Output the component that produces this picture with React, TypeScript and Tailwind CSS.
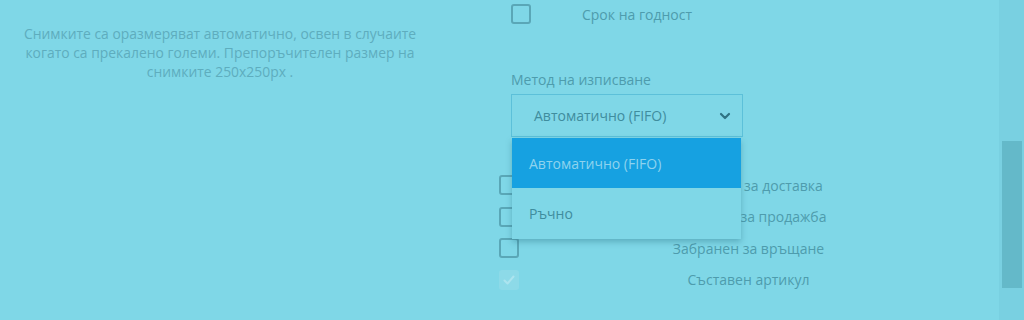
import React from "react";

const font = { fontFamily: '"Open Sans", "Noto Sans", sans-serif' };

const Box = ({ checked = false }: { checked?: boolean }) => {
	if (checked)
		return (
			<div className="w-5 h-5 shrink-0 rounded-[3px] bg-[#8ddae8] flex items-center justify-center">
				<svg width="14" height="14" viewBox="0 0 14 14" fill="none">
					<path d="M2.5 7.5l3 3 6-7" stroke="#ace4ef" strokeWidth="2" strokeLinecap="round" strokeLinejoin="round" />
				</svg>
			</div>
		);

	return <div className="w-5 h-5 shrink-0 rounded-[3px] border-2 border-[#5aa7b7]" />;
};

const CheckRow = ({ label, checked }: { label: string; checked?: boolean }) => {
	return (
		<div className="flex items-center h-[20px]">
			<Box checked={checked} />
			<div className="flex-1 text-center text-[14px] text-[#4e9cad] pl-[3px]">{label}</div>
		</div>
	);
};

const App = () => {
	return (
		<div className="w-[1024px] h-[320px] bg-[#7fd7e7] overflow-hidden flex" style={font}>
			<div className="w-[438px] shrink-0 pt-[24px] pl-[2px]">
				<p className="text-center text-[13.9px] leading-[19px] text-[#5eadbe]">
					Снимките са оразмеряват автоматично, освен в случаите
					<br />
					когато са прекалено големи. Препоръчителен размер на
					<br />
					снимките 250x250px .
				</p>
			</div>

			<div className="w-[61px] shrink-0" />

			<div className="w-[476px] shrink-0 pt-[4px]">
				<div className="pl-[12px] w-[244px]">
					<div className="flex items-center h-[20px]">
						<Box />
						<div className="flex-1 text-center text-[14px] text-[#4e9cad]">Срок на годност</div>
					</div>
				</div>

				<div className="pl-[12px] mt-[47px]">
					<div className="text-[14px] text-[#4e9cad] leading-[18px]">Метод на изписване</div>
					<div className="relative mt-[5px] w-[232px]">
						<div className="h-[43px] border border-[#5cc0d9] flex items-center pl-[22px] pr-[10px] text-[14px] text-[#3f8d9e]">
							<span className="flex-1">Автоматично (FIFO)</span>
							<svg width="14" height="14" viewBox="0 0 14 14" fill="none">
								<path d="M3 5l4 4 4-4" stroke="#2f7383" strokeWidth="2.2" strokeLinecap="round" strokeLinejoin="round" />
							</svg>
						</div>
						<div className="absolute left-[1px] top-[44px] w-[229px] z-10 bg-[#7fd7e7] shadow-[0_3px_6px_rgba(30,100,120,0.35)] text-[14px]">
							<div className="h-[50px] bg-[#16a1e1] flex items-center pl-[17px] text-[#8ed3ee]">Автоматично (FIFO)</div>
							<div className="h-[51px] flex items-center pl-[17px] text-[#3f8d9e]">Ръчно</div>
						</div>
					</div>
				</div>

				<div className="mt-[38px] flex flex-col gap-[11.5px]">
					<CheckRow label="Забранен за доставка" />
					<CheckRow label="Забранен за продажба" />
					<CheckRow label="Забранен за връщане" />
					<CheckRow label="Съставен артикул" checked />
				</div>
			</div>

			<div className="flex-1" />

			<div className="w-[25px] shrink-0 bg-[#79d0e1] flex flex-col pt-[141px] pl-[3px] pr-[2px]">
				<div className="h-[147px] bg-[#64b9c9]" />
			</div>
		</div>
	);
};

export default App;
